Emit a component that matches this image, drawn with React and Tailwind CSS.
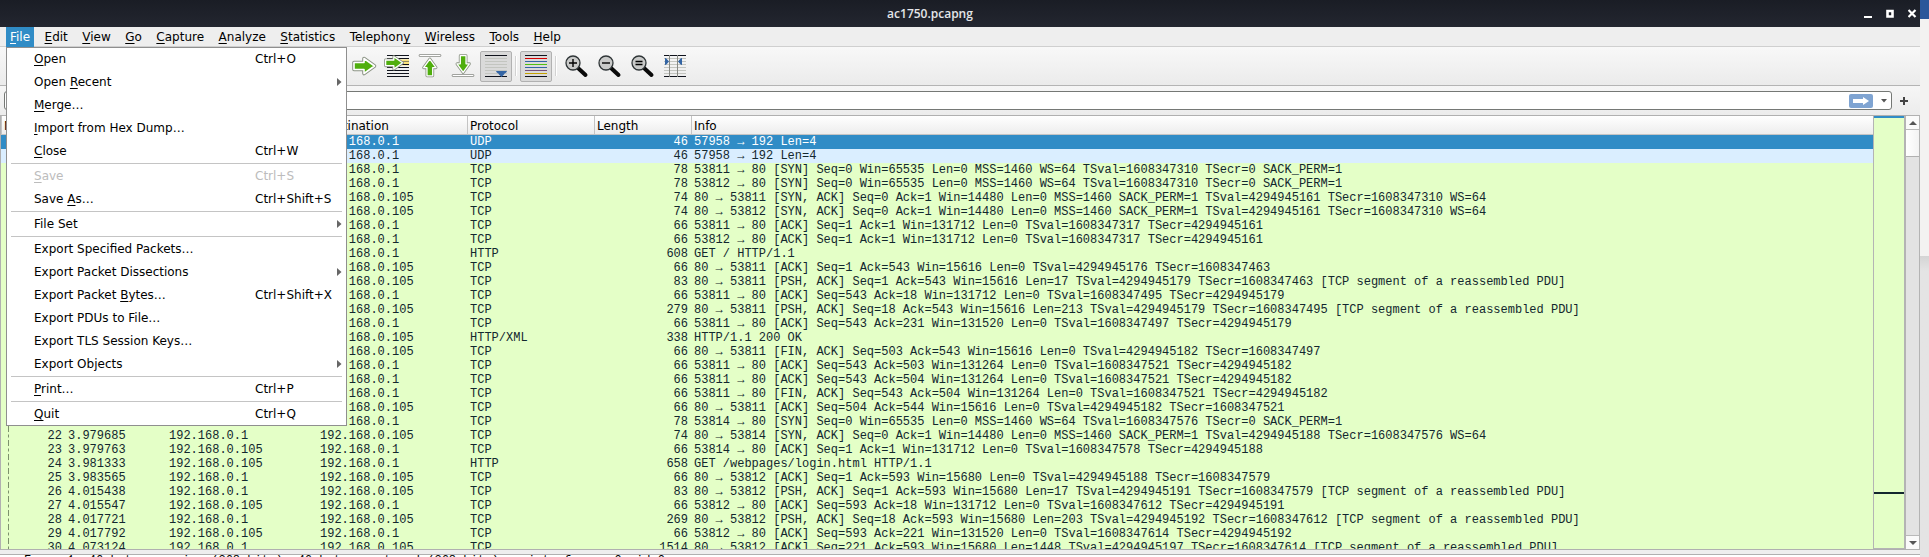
import React from "react";

const MENUS = ["_File", "_Edit", "_View", "_Go", "_Capture", "_Analyze", "_Statistics", "Telephon_y", "_Wireless", "_Tools", "_Help"];

const FILE_MENU = [
  { label: "_Open", keys: "Ctrl+O" },
  { label: "Open _Recent", sub: true },
  { label: "_Merge…" },
  { label: "_Import from Hex Dump…" },
  { label: "_Close", keys: "Ctrl+W" },
  null,
  { label: "_Save", keys: "Ctrl+S", disabled: true },
  { label: "Save _As…", keys: "Ctrl+Shift+S" },
  null,
  { label: "File Set", sub: true },
  null,
  { label: "Export Specified Packets…" },
  { label: "Export Packet Dissections", sub: true },
  { label: "Export Packet _Bytes…", keys: "Ctrl+Shift+X" },
  { label: "Export PDUs to File…" },
  { label: "Export TLS Session Keys…" },
  { label: "Export Objects", sub: true },
  null,
  { label: "_Print…", keys: "Ctrl+P" },
  null,
  { label: "_Quit", keys: "Ctrl+Q" },
];

const GW = "192.168.0.1";
const PC = "192.168.0.105";
const SEG = " [TCP segment of a reassembled PDU]";

// [time, destination, protocol, length, info]
const PACKETS = [
  ["", GW, "UDP", 46, "57958 → 192 Len=4"],
  ["", GW, "UDP", 46, "57958 → 192 Len=4"],
  ["", GW, "TCP", 78, "53811 → 80 [SYN] Seq=0 Win=65535 Len=0 MSS=1460 WS=64 TSval=1608347310 TSecr=0 SACK_PERM=1"],
  ["", GW, "TCP", 78, "53812 → 80 [SYN] Seq=0 Win=65535 Len=0 MSS=1460 WS=64 TSval=1608347310 TSecr=0 SACK_PERM=1"],
  ["", PC, "TCP", 74, "80 → 53811 [SYN, ACK] Seq=0 Ack=1 Win=14480 Len=0 MSS=1460 SACK_PERM=1 TSval=4294945161 TSecr=1608347310 WS=64"],
  ["", PC, "TCP", 74, "80 → 53812 [SYN, ACK] Seq=0 Ack=1 Win=14480 Len=0 MSS=1460 SACK_PERM=1 TSval=4294945161 TSecr=1608347310 WS=64"],
  ["", GW, "TCP", 66, "53811 → 80 [ACK] Seq=1 Ack=1 Win=131712 Len=0 TSval=1608347317 TSecr=4294945161"],
  ["", GW, "TCP", 66, "53812 → 80 [ACK] Seq=1 Ack=1 Win=131712 Len=0 TSval=1608347317 TSecr=4294945161"],
  ["", GW, "HTTP", 608, "GET / HTTP/1.1"],
  ["", PC, "TCP", 66, "80 → 53811 [ACK] Seq=1 Ack=543 Win=15616 Len=0 TSval=4294945176 TSecr=1608347463"],
  ["", PC, "TCP", 83, "80 → 53811 [PSH, ACK] Seq=1 Ack=543 Win=15616 Len=17 TSval=4294945179 TSecr=1608347463" + SEG],
  ["", GW, "TCP", 66, "53811 → 80 [ACK] Seq=543 Ack=18 Win=131712 Len=0 TSval=1608347495 TSecr=4294945179"],
  ["", PC, "TCP", 279, "80 → 53811 [PSH, ACK] Seq=18 Ack=543 Win=15616 Len=213 TSval=4294945179 TSecr=1608347495" + SEG],
  ["", GW, "TCP", 66, "53811 → 80 [ACK] Seq=543 Ack=231 Win=131520 Len=0 TSval=1608347497 TSecr=4294945179"],
  ["", PC, "HTTP/XML", 338, "HTTP/1.1 200 OK"],
  ["", PC, "TCP", 66, "80 → 53811 [FIN, ACK] Seq=503 Ack=543 Win=15616 Len=0 TSval=4294945182 TSecr=1608347497"],
  ["", GW, "TCP", 66, "53811 → 80 [ACK] Seq=543 Ack=503 Win=131264 Len=0 TSval=1608347521 TSecr=4294945182"],
  ["", GW, "TCP", 66, "53811 → 80 [ACK] Seq=543 Ack=504 Win=131264 Len=0 TSval=1608347521 TSecr=4294945182"],
  ["", GW, "TCP", 66, "53811 → 80 [FIN, ACK] Seq=543 Ack=504 Win=131264 Len=0 TSval=1608347521 TSecr=4294945182"],
  ["", PC, "TCP", 66, "80 → 53811 [ACK] Seq=504 Ack=544 Win=15616 Len=0 TSval=4294945182 TSecr=1608347521"],
  ["", GW, "TCP", 78, "53814 → 80 [SYN] Seq=0 Win=65535 Len=0 MSS=1460 WS=64 TSval=1608347576 TSecr=0 SACK_PERM=1"],
  ["3.979685", PC, "TCP", 74, "80 → 53814 [SYN, ACK] Seq=0 Ack=1 Win=14480 Len=0 MSS=1460 SACK_PERM=1 TSval=4294945188 TSecr=1608347576 WS=64"],
  ["3.979763", GW, "TCP", 66, "53814 → 80 [ACK] Seq=1 Ack=1 Win=131712 Len=0 TSval=1608347578 TSecr=4294945188"],
  ["3.981333", GW, "HTTP", 658, "GET /webpages/login.html HTTP/1.1"],
  ["3.983565", PC, "TCP", 66, "80 → 53812 [ACK] Seq=1 Ack=593 Win=15680 Len=0 TSval=4294945188 TSecr=1608347579"],
  ["4.015438", PC, "TCP", 83, "80 → 53812 [PSH, ACK] Seq=1 Ack=593 Win=15680 Len=17 TSval=4294945191 TSecr=1608347579" + SEG],
  ["4.015547", GW, "TCP", 66, "53812 → 80 [ACK] Seq=593 Ack=18 Win=131712 Len=0 TSval=1608347612 TSecr=4294945191"],
  ["4.017721", PC, "TCP", 269, "80 → 53812 [PSH, ACK] Seq=18 Ack=593 Win=15680 Len=203 TSval=4294945192 TSecr=1608347612" + SEG],
  ["4.017792", GW, "TCP", 66, "53812 → 80 [ACK] Seq=593 Ack=221 Win=131520 Len=0 TSval=1608347614 TSecr=4294945192"],
  ["4.073124", PC, "TCP", 1514, "80 → 53812 [ACK] Seq=221 Ack=593 Win=15680 Len=1448 TSval=4294945197 TSecr=1608347614" + SEG],
];

const COLUMNS = ["No.", "Time", "Source", "Destination", "Protocol", "Length", "Info"];

// An underscore marks the letter that carries the mnemonic underline.
function Mnemonic({ text }) {
  const i = text.indexOf("_");
  if (i < 0) return text;
  return (
    <>
      {text.slice(0, i)}
      <span className="underline decoration-1 underline-offset-2 [text-decoration-skip-ink:none]">{text[i + 1]}</span>
      {text.slice(i + 2)}
    </>
  );
}

function TitleBar() {
  return (
    <header className="flex h-[27px] shrink-0 items-center bg-linear-to-b from-[#1a1d25] to-[#232630] text-[#e4e6e9]">
      <h1 className="flex-1 text-center font-['Open_Sans',sans-serif] text-xs leading-4 font-semibold">ac1750.pcapng</h1>
      <div className="flex w-[60px] gap-[10px] pl-1">
        <button aria-label="Minimize" className="size-3">
          <svg viewBox="0 0 12 12" className="size-3"><path d="M0 8h8v2H0z" fill="#fff" /></svg>
        </button>
        <button aria-label="Maximize" className="size-3">
          <svg viewBox="0 0 12 12" className="size-3"><path d="M1.500 3h5v5.500h-5z" fill="none" stroke="#fff" strokeWidth="2.600" /></svg>
        </button>
        <button aria-label="Close" className="size-3">
          <svg viewBox="0 0 12 12" className="size-3"><path d="M.5 2l7 7M7.500 2l-7 7" fill="none" stroke="#fff" strokeWidth="2.200" /></svg>
        </button>
      </div>
    </header>
  );
}

function FileMenu() {
  return (
    <ul className="absolute top-5 left-0 z-20 flex w-[341px] flex-col gap-px border border-[#8f8f8f] bg-white">
      {FILE_MENU.map((item, i) =>
        item ? (
          <li key={i}>
            <button
              disabled={item.disabled}
              className="flex h-[22px] w-full items-center pr-1 pl-[27px] text-left text-black disabled:text-[#bcbcbc]"
            >
              <span className="flex-1">
                <Mnemonic text={item.label} />
              </span>
              {item.sub ? (
                <svg viewBox="0 0 5 8" className="h-2 w-[5px]"><path d="M0 0l4.500 4L0 8z" fill="#666" /></svg>
              ) : (
                <span className="w-[87px]">{item.keys}</span>
              )}
            </button>
          </li>
        ) : (
          <li key={i} role="separator" className="mx-1 h-px bg-[#c4c4c4]" />
        )
      )}
    </ul>
  );
}

function MenuBar() {
  return (
    <nav className="h-5 shrink-0 border-b border-[#cfcfcf] bg-[#eeeeee] pl-[6px]">
      <div className="flex w-[559px] justify-between">
        {MENUS.map((m, i) => (
          <div key={m} className="relative">
            <button className={i === 0 ? "h-5 bg-[#308cc6] px-1 text-white" : "h-[19px] px-1 text-black"}>
              <Mnemonic text={m} />
            </button>
            {i === 0 && <FileMenu />}
          </div>
        ))}
      </div>
    </nav>
  );
}

const ARROW = "M2 8.500h10V4.500l10.500 7.500-10.500 7.500v-4H2z";

function GreenArrow({ transform }) {
  return (
    <g transform={transform}>
      <path d={ARROW} fill="#fff" stroke="#8b9384" strokeWidth="3.600" strokeLinejoin="round" />
      <path d={ARROW} fill="#4fae0d" stroke="#fff" strokeWidth="1.600" strokeLinejoin="round" />
    </g>
  );
}

function Rules({ colors, x1 = 1, x2 = 23 }) {
  return colors.map((c, i) => (
    <path key={i} d={`M${x1} ${1.5 + i * 3}H${x2}`} stroke={c} strokeWidth="1" />
  ));
}

function Magnifier({ children }) {
  return (
    <>
      <path d="M14.500 14.500l7 6.500" stroke="#0a0a0a" strokeWidth="4" strokeLinecap="round" />
      <circle cx="9" cy="9" r="7" fill="#c9cac9" stroke="#2e3436" strokeWidth="1.300" />
      <path d={children} stroke="#000" strokeWidth="1.400" fill="none" />
    </>
  );
}

const DARK = "#10131c";
const PALE = "#c3c5c0";

const TOOLS = [
  { name: "Go to next packet", art: <GreenArrow transform="translate(0 0)" /> },
  {
    name: "Go to packet",
    art: (
      <>
        <path d="M15 5.500h9v6h-9z" fill="#fbe27a" />
        <Rules colors={[DARK, DARK, "#8f8a63", DARK, DARK, DARK, DARK, DARK]} x1={2} x2={24} />
        <GreenArrow transform="translate(-1 -1) scale(.82)" />
      </>
    ),
  },
  {
    name: "Go to first packet",
    art: (
      <>
        <path d="M2 1.500h20" stroke="#888a85" strokeWidth="2.600" strokeLinecap="round" />
        <path d="M2 1.500h20" stroke="#fff" strokeWidth="1" strokeLinecap="round" />
        <GreenArrow transform="translate(2 23.500) rotate(-90) scale(.82)" />
      </>
    ),
  },
  {
    name: "Go to last packet",
    art: (
      <>
        <path d="M2 21.500h20" stroke="#888a85" strokeWidth="2.600" strokeLinecap="round" />
        <path d="M2 21.500h20" stroke="#fff" strokeWidth="1" strokeLinecap="round" />
        <GreenArrow transform="translate(22 0) rotate(90) scale(.82)" />
      </>
    ),
  },
  {
    name: "Auto scroll",
    on: true,
    art: (
      <>
        <Rules colors={[DARK, PALE, PALE, PALE, PALE, PALE, PALE, DARK]} />
        <path d="M12 17h11c-.5 2-2.500 2-3 3.500l-2.500 2.500-2.500-2.500C14.500 19 12.500 19 12 17z" fill="#3465a4" />
      </>
    ),
  },
  null,
  {
    name: "Colorize",
    on: true,
    art: <Rules colors={[DARK, "#d40000", "#3465a4", "#4fc010", "#3465a4", "#75507b", "#c4a000", DARK]} />,
  },
  null,
  { name: "Zoom in", art: <Magnifier>M5 9h8M9 5v8</Magnifier> },
  { name: "Zoom out", art: <Magnifier>M5 9h8</Magnifier> },
  { name: "Normal size", art: <Magnifier>M5.500 7.500h7M5.500 10.500h7</Magnifier> },
  {
    name: "Resize columns",
    art: (
      <>
        <Rules colors={[DARK, PALE, PALE, PALE, PALE, PALE, PALE, DARK]} />
        <path d="M6.500 1v22M14.500 1v22" stroke="#888a85" strokeWidth="1" />
        <path d="M2 4c1.500 0 2 1.500 4 3.500C4 9.500 3.500 11 2 11zM19 4c-1.500 0-2 1.500-4 3.500 2 2 2.500 3.500 4 3.500z" fill="#3465a4" />
      </>
    ),
  },
];

function ToolBar() {
  return (
    <div role="toolbar" className="flex h-[39px] shrink-0 items-center gap-px border-b border-[#b4b4b4] bg-linear-to-b from-[#f8f8f8] to-[#ebebeb] pl-[348px]">
      {TOOLS.map((t, i) =>
        t ? (
          <button
            key={i}
            aria-label={t.name}
            className={
              t.on
                ? "flex h-[31px] w-8 items-center justify-center rounded-xs border border-[#b1b1b1] bg-[#dadada]"
                : "flex h-[31px] w-8 items-center justify-center"
            }
          >
            <svg viewBox="0 0 24 24" fill="none" className="size-6 overflow-visible">{t.art}</svg>
          </button>
        ) : (
          <span key={i} className="mx-[2px] h-5 w-[2px] border-l border-[#d2d2d2] bg-white" />
        )
      )}
    </div>
  );
}

function FilterBar() {
  return (
    <div className="flex h-[29px] shrink-0 items-center bg-linear-to-b from-[#f6f6f6] to-[#ececec] pl-1">
      <div className="flex h-[19px] flex-1 items-center rounded-[3px] border border-[#757875] bg-white pr-1">
        <input aria-label="Display filter" className="h-full min-w-0 flex-1 px-2 outline-none" />
        <button aria-label="Apply filter" className="flex h-[14px] w-6 items-center justify-center rounded-xs bg-[#7fa4d2]">
          <svg viewBox="0 0 18 8" className="h-2 w-[18px]"><path d="M1 2h10V0l6 4-6 4V6H1z" fill="#fff" /></svg>
        </button>
        <button aria-label="Filter history" className="ml-2 w-[6px]">
          <svg viewBox="0 0 6 4" className="h-1 w-[6px]"><path d="M0 0h6L3 3.500z" fill="#555" /></svg>
        </button>
      </div>
      <button aria-label="Add filter button" className="flex w-[28px] justify-center pr-1">
        <svg viewBox="0 0 8 8" className="size-2"><path d="M0 4h8M4 0v8" stroke="#444" strokeWidth="2" /></svg>
      </button>
    </div>
  );
}

function PacketTable() {
  return (
    <div className="min-w-0 flex-1 overflow-hidden bg-[#e4ffc7]">
      <table className="w-full table-fixed border-collapse">
        <colgroup>
          <col className="w-16" />
          <col className="w-[101px]" />
          <col className="w-[151px]" />
          <col className="w-[150px]" />
          <col className="w-[127px]" />
          <col className="w-[97px]" />
          <col />
        </colgroup>
        <thead>
          <tr className="h-[19px] bg-linear-to-b from-white to-[#ececec]">
            {COLUMNS.map((c) => (
              <th key={c} scope="col" className="p-0 text-left font-normal text-black">
                <div className="h-[19px] overflow-hidden border-b border-l border-[#c4c4c4] pl-[2px] leading-[20px]">{c}</div>
              </th>
            ))}
          </tr>
        </thead>
        <tbody className="font-['Liberation_Mono',monospace] text-xs leading-[14px] whitespace-pre text-[#12272e]">
          {PACKETS.map(([time, dst, proto, len, info], i) => (
            <tr key={i} className={i === 0 ? "bg-[#308cc6] text-white" : i === 1 ? "bg-[#daeeff]" : "bg-[#e4ffc7]"}>
              <td className="py-0 pr-[3px] pl-[7px] text-right">
                <div className={i < 2 ? "h-[14px]" : "h-[14px] border-l border-dashed border-[#7c916c]"}>{i + 1}</div>
              </td>
              <td className="px-[3px] py-0">{time}</td>
              <td className="px-[3px] py-0">{dst === GW ? PC : GW}</td>
              <td className="px-[3px] py-0">{dst}</td>
              <td className="px-[3px] py-0">{proto}</td>
              <td className="px-[3px] py-0 text-right">{len}</td>
              <td className="overflow-hidden px-[3px] py-0">{info}</td>
            </tr>
          ))}
        </tbody>
      </table>
    </div>
  );
}

function ScrollBar() {
  return (
    <div className="flex w-[15px] shrink-0 flex-col border-x border-[#b4b4b4] bg-[#e3e3e3]">
      <button aria-label="Scroll up" className="flex h-[14px] items-center justify-center border-b border-[#b9b9b9] bg-[#fafafa]">
        <svg viewBox="0 0 8 4" className="h-1 w-2"><path d="M0 4h8L4 0z" fill="#555" /></svg>
      </button>
      <div className="h-[27px] border-b border-[#b0b0b0] bg-linear-to-r from-white to-[#f3f3f3]" />
      <div className="flex-1" />
      <button aria-label="Scroll down" className="flex h-[14px] items-center justify-center border-t border-[#b9b9b9] bg-[#fafafa]">
        <svg viewBox="0 0 8 4" className="h-1 w-2"><path d="M0 0h8L4 4z" fill="#555" /></svg>
      </button>
    </div>
  );
}

function MiniMap() {
  return (
    <div className="flex w-8 shrink-0 flex-col border-x border-b border-[#b4b4b4] bg-[#e4ffc7]">
      <div className="h-[2px] bg-[#308cc6]" />
      <div className="flex-1" />
      <div className="h-[2px] bg-[#12272e]" />
      <div className="h-[54px]" />
    </div>
  );
}

export default function App() {
  return (
    <div className="flex h-screen overflow-hidden bg-[#e4e4e4]">
      <div className="flex min-w-0 flex-1 flex-col bg-[#eeeeee] font-['DejaVu_Sans',sans-serif] text-xs">
        <TitleBar />
        <MenuBar />
        <ToolBar />
        <FilterBar />
        <main className="flex min-h-0 flex-1 border-t border-b border-l border-[#b0b0b0]">
          <PacketTable />
          <MiniMap />
          <ScrollBar />
        </main>
        <section className="mt-1 h-[3px] shrink-0 overflow-hidden border-t border-[#b0b0b0] bg-white">
          <p className="pl-6 font-['Liberation_Mono',monospace] text-xs leading-[12px] whitespace-nowrap text-black">
            Frame 1: 46 bytes on wire (368 bits), 46 bytes captured (368 bits) on interface en0, id 0
          </p>
        </section>
      </div>
      <aside className="flex w-[9px] shrink-0 flex-col">
        <div className="h-[19px] bg-[#2b579a]" />
        <div className="h-[237px] bg-[#f3f2f1]" />
        <div className="flex-1 bg-linear-to-b from-[#d4d4d4] to-[#e4e4e4] to-5%" />
      </aside>
    </div>
  );
}
